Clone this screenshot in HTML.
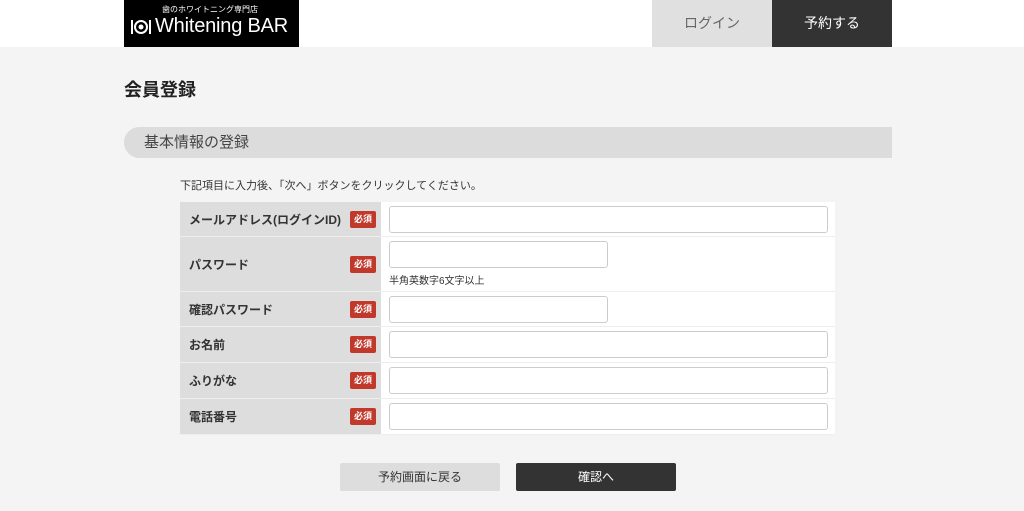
<!DOCTYPE html>
<html><head><meta charset="utf-8"><style>
*{margin:0;padding:0;box-sizing:border-box}
body{width:1024px;height:511px;background:#f4f4f4;font-family:"Liberation Sans","Noto Sans CJK JP",sans-serif;color:#333;position:relative;overflow:hidden}
.hdr{position:absolute;left:0;top:0;width:1024px;height:47px;background:#fff}
.logo{position:absolute;left:124px;top:0;width:175px;height:47px;background:#000;color:#fff;overflow:hidden}
.logo .s{position:absolute;left:38px;top:4px;font-size:8px;white-space:nowrap}
.logo .b{position:absolute;left:31px;top:15px;font-size:20px;white-space:nowrap;letter-spacing:-.2px}
.logo .i{position:absolute;left:6px;top:18px;width:22px;height:18px}
.login{position:absolute;left:652px;top:0;width:120px;height:47px;background:#e0e0e0;color:#666;font-size:14px;text-align:center;line-height:47px}
.rsv{position:absolute;left:772px;top:0;width:120px;height:47px;background:#333;color:#fff;font-size:14px;text-align:center;line-height:47px}
h1{position:absolute;left:124px;top:76px;font-size:18px;font-weight:bold;color:#222}
.bar{position:absolute;left:124px;top:127px;width:768px;height:31px;background:#dcdcdc;border-radius:16px 0 0 16px;font-size:15px;line-height:31px;padding-left:20px;color:#444}
.note{position:absolute;left:180px;top:177px;font-size:11px}
.row{position:absolute;left:180px;width:655px;border-bottom:1px solid #eee}
.lab{position:absolute;left:0;top:0;bottom:0;width:201px;background:#ddd;font-size:12px;font-weight:bold;padding-left:9px;display:flex;align-items:center}
.req{position:absolute;left:170px;width:26px;height:17px;background:#c0392b;color:#fff;font-size:9px;border-radius:2px;text-align:center;line-height:17px;font-weight:bold}
.val{position:absolute;left:201px;right:0;top:0;bottom:0;background:#fff}
.in{position:absolute;left:8px;top:4px;height:27px;background:#fff;border:1px solid #ccc;border-radius:3px}
.btn{position:absolute;top:463px;width:160px;height:28px;text-align:center;line-height:28px;font-size:12px;border-radius:2px}
</style></head><body>
<div class="hdr"></div>
<div class="logo"><span class="s">歯のホワイトニング専門店</span>
<svg class="i" viewBox="0 0 22 18"><rect x="1" y="2" width="2" height="14" fill="#fff"/><circle cx="11" cy="9" r="6" fill="none" stroke="#fff" stroke-width="2"/><circle cx="11" cy="9" r="2.5" fill="#fff"/><rect x="19" y="2" width="2" height="14" fill="#fff"/></svg>
<span class="b">Whitening BAR</span></div>
<div class="login">ログイン</div><div class="rsv">予約する</div>
<h1>会員登録</h1>
<div class="bar">基本情報の登録</div>
<div class="note">下記項目に入力後、「次へ」ボタンをクリックしてください。</div>
<div class="row" style="top:202px;height:35px"><div class="lab">メールアドレス(ログインID)</div><div class="req" style="top:9px">必須</div><div class="val"><div class="in" style="width:439px"></div></div></div>
<div class="row" style="top:237px;height:55px"><div class="lab">パスワード</div><div class="req" style="top:19px">必須</div><div class="val"><div class="in" style="width:219px"></div><div style="position:absolute;left:8px;top:35px;font-size:10px">半角英数字6文字以上</div></div></div>
<div class="row" style="top:292px;height:35px"><div class="lab">確認パスワード</div><div class="req" style="top:9px">必須</div><div class="val"><div class="in" style="width:219px"></div></div></div>
<div class="row" style="top:327px;height:36px"><div class="lab">お名前</div><div class="req" style="top:9px">必須</div><div class="val"><div class="in" style="width:439px"></div></div></div>
<div class="row" style="top:363px;height:36px"><div class="lab">ふりがな</div><div class="req" style="top:9px">必須</div><div class="val"><div class="in" style="width:439px"></div></div></div>
<div class="row" style="top:399px;height:36px"><div class="lab">電話番号</div><div class="req" style="top:9px">必須</div><div class="val"><div class="in" style="width:439px"></div></div></div>
<div class="btn" style="left:340px;background:#ddd;color:#333">予約画面に戻る</div>
<div class="btn" style="left:516px;background:#333;color:#fff">確認へ</div>
</body></html>
